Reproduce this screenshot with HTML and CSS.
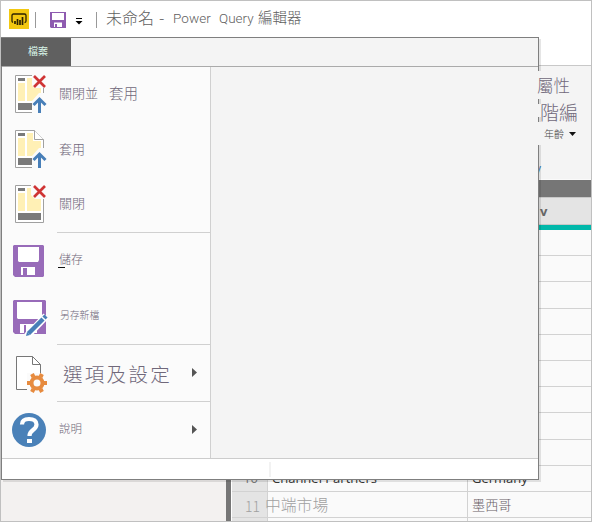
FILE: index.html
```html
<!DOCTYPE html>
<html lang="zh-Hant">
<head>
<meta charset="utf-8">
<title>Power Query 編輯器</title>
<link rel="stylesheet" href="styles.css">
</head>
<body>
<div class="window">
  <header class="titlebar">
    <svg class="logo" width="20" height="20" viewBox="0 0 20 20"><rect width="20" height="20" fill="#f2c811"/><path d="M4 13.5Q3 13 3 12V6.500Q3 5 4.500 5H15.500Q17 5 17 6.500V12Q17 13.500 15.500 13.500" fill="none" stroke="#2b2200" stroke-width="1.300"/><path d="M6 12v3M8.500 10v6M11 11v5M13.500 8v8" stroke="#2b2200" stroke-width="1.700"/></svg>
    <i class="sep"></i>
    <svg class="disk" width="16" height="16" viewBox="0 0 16 16"><path d="M0 0H16V16H1L0 15Z" fill="#8e5bb0"/><path d="M2 1H14V8H2ZM4 10.500H12V15H7V12H5V15H4Z" fill="#fff"/></svg>
    <svg class="drop" width="8" height="8" viewBox="0 0 8 8"><path d="M1 .5H7" stroke="#000"/><path d="M0.500 3H7.500L4 6.500Z" fill="#000"/></svg>
    <i class="sep sep2"></i>
    <h1 class="title"><span class="t1">未命名</span><span class="t2">-</span><span class="t3">Power</span><span class="t4">Query</span><span class="t5">編輯器</span></h1>
  </header>
  <div class="ribbon"><span class="ribbon-link">y</span></div>
  <main class="body">
    <aside class="queries"></aside>
    <div class="splitter"></div>
    <section class="grid">
      <div class="band"></div>
      <div class="head"><b>v</b></div>
      <div class="quality"></div>
      <div class="row"><span class="num">1</span><span class="seg"></span><span class="country"></span></div>
      <div class="row"><span class="num">2</span><span class="seg"></span><span class="country"></span></div>
      <div class="row"><span class="num">3</span><span class="seg"></span><span class="country"></span></div>
      <div class="row"><span class="num">4</span><span class="seg"></span><span class="country"></span></div>
      <div class="row"><span class="num">5</span><span class="seg"></span><span class="country"></span></div>
      <div class="row"><span class="num">6</span><span class="seg"></span><span class="country"></span></div>
      <div class="row"><span class="num">7</span><span class="seg"></span><span class="country"></span></div>
      <div class="row"><span class="num">8</span><span class="seg"></span><span class="country"></span></div>
      <div class="row"><span class="num">9</span><span class="seg"></span><span class="country"></span></div>
      <div class="row"><span class="num">10</span><span class="seg">Channel Partners</span><span class="country">Germany</span></div>
      <div class="row zh"><span class="num">11</span><span class="seg">中端市場</span><span class="country">墨西哥</span></div>
      <div class="row"><span class="num"></span><span class="seg"></span><span class="country"></span></div>
    </section>
  </main>

  <nav class="menu">
    <div class="tabs"><span class="file">檔案</span></div>
    <div class="content">
      <ul class="items">
        <li><svg class="icon" width="40" height="55" viewBox="0 0 40 55"><path d="M5.500 8.500H33.500V45.500H5.500Z" fill="#fff" stroke="#a0a0a0"/><path d="M8 11h7v3H8ZM8 36h23v7H8Z" fill="#7a7a7a"/><path d="M8 16h7v18H8ZM17 11h14v23H17Z" fill="#fff0b5"/><path d="M22 7h15v14H24l-2-3ZM22 34l7-8h9v20H22Z" fill="#fbfbfb"/><path d="M24 9l11 11M35 9l-11 11" stroke="#cf3434" stroke-width="2.700"/><path d="M29.500 46V33M23.500 38l6-6 6 6" fill="none" stroke="#487fb8" stroke-width="3"/></svg><span class="l1">關閉並</span><span class="l1b">套用</span></li>
        <li><svg class="icon" width="40" height="55" viewBox="0 0 40 55"><path d="M5.500 8.500H24.500L33.500 17.500V45.500H5.500Z" fill="#fff" stroke="#a0a0a0"/><path d="M8 11h7v3H8ZM8 36h15v7H8Z" fill="#7a7a7a"/><path d="M8 16h7v18H8ZM17 11h6v8h8v15H17Z" fill="#fff0b5"/><path d="M24.500 8.500v9h9" fill="#fff" stroke="#a0a0a0"/><path d="M22 34l7-8h9v20H22Z" fill="#fbfbfb"/><path d="M29.500 46V33M23.500 38l6-6 6 6" fill="none" stroke="#487fb8" stroke-width="3"/></svg><span class="l2">套用</span></li>
        <li><svg class="icon" width="40" height="55" viewBox="0 0 40 55"><path d="M5.500 8.500H33.500V45.500H5.500Z" fill="#fff" stroke="#a0a0a0"/><path d="M8 11h7v3H8ZM8 36h23v7H8Z" fill="#7a7a7a"/><path d="M8 16h7v18H8ZM17 11h14v23H17Z" fill="#fff0b5"/><path d="M21 7h16v15H25l-4-4Z" fill="#fbfbfb"/><path d="M24 9l11 11M35 9l-11 11" stroke="#cf3434" stroke-width="2.700"/></svg><span class="l2 l3">關閉</span></li>
        <li class="ruled"><svg class="icon" width="40" height="55" viewBox="0 0 40 55"><path d="M4 12H33L34 13V43L33 44H5L3 42V13Z" fill="#986bb9"/><path d="M8 14H29V27L28 29H9L8 28ZM11 34H25V42H17V35H13V42H11Z" fill="#fff"/></svg><span class="l4"><u></u>儲存</span></li>
        <li><svg class="icon" width="40" height="55" viewBox="0 0 40 55"><path d="M4 11H35L36 12V45H5L3 43V12Z" fill="#986bb9"/><path d="M7 13H32V28L31 30H8L7 29ZM10 35H27V44H16V36H14V44H10Z" fill="#fff"/><path d="M17 47L36 27" stroke="#fff" stroke-width="7"/><path d="M18.500 44.500L33 30" stroke="#487fb8" stroke-width="4.500"/><path d="M34 29L36 27" stroke="#487fb8" stroke-width="4.500"/><path d="M16 47l1-4 3 3Z" fill="#487fb8"/></svg><span class="l5">另存新檔</span></li>
        <li class="ruled"><svg class="icon" width="40" height="55" viewBox="0 0 40 55"><path d="M6.500 10.500H22.500L30.500 18.500V43.500H6.500Z" fill="#fff" stroke="#777"/><path d="M22.500 10.500v8h8" fill="none" stroke="#777"/><path d="M17 27h21v20H17Z" fill="#fbfbfb"/><g fill="none" stroke="#e78b3f"><circle cx="27" cy="37" r="5.500" stroke-width="4"/><path d="M23.500 43l-1.500 3M30.500 43l1.500 3M23.500 31l-1.500-3M30.500 31l1.500-3M20 37h-3M34 37h3" stroke-width="4"/></g></svg><span class="l6">選項及設定</span><svg class="arrow" width="5" height="9" viewBox="0 0 5 9"><path d="M0 0L5 4.500 0 9Z" fill="#555"/></svg></li>
        <li class="ruled"><svg class="icon" width="40" height="55" viewBox="0 0 40 55"><circle cx="19" cy="28" r="17" fill="#4a81b8"/><path d="M12 22.500Q12 17 19 17Q26.500 17 26.500 22.500Q26.500 25.500 23 28Q19.500 30.500 19.500 34" fill="none" stroke="#fff" stroke-width="4.200"/><path d="M17 37h5v4h-5Z" fill="#fff"/></svg><span class="l7">說明</span><svg class="arrow" width="5" height="9" viewBox="0 0 5 9"><path d="M0 0L5 4.500 0 9Z" fill="#555"/></svg></li>
      </ul>
      <div class="pane"></div>
    </div>
    <div class="foot"><i></i></div>
  </nav>

  <div class="commands">
    <span class="c1">屬性</span>
    <span class="c2">階編</span>
    <span class="c3">年齡<svg width="7" height="4" viewBox="0 0 7 4"><path d="M0 0H7L3.500 4Z" fill="#111"/></svg></span>
  </div>
</div>
</body>
</html>
```
FILE: styles.css
```css
* { box-sizing: border-box; }
body { margin: 0; font-family: "Noto Sans CJK TC", sans-serif; color: #70687a; }
.window { position: relative; width: 592px; height: 522px; border: 1px solid #c0c0c0; background: #fff; overflow: hidden; display: flex; flex-direction: column; }
.titlebar { height: 65px; flex: none; display: flex; align-items: flex-start; padding: 0 0 0 8px; border-bottom: 1px solid #c8c8c8; }
.logo { margin-top: 8px; }
.sep { width: 1px; height: 16px; margin: 11px 0 0 6px; background: #999; }
.disk { margin: 11px 0 0 14px; }
.drop { margin: 17px 0 0 9px; }
.sep2 { margin-left: 13px; }
.title { display: flex; margin: 0 0 0 9px; font-weight: 300; font-size: 16px; line-height: 32px; color: #606060; white-space: nowrap; }
.title span { flex: none; }
.t1 { width: 53px; }
.t2 { width: 14px; }
.title .t3, .title .t4 { font-family: Roboto, sans-serif; font-size: 13.5px; line-height: 34px; }
.t3 { width: 46px; letter-spacing: .1px; }
.t4 { width: 39px; }
.t5 { font-size: 14.500px; line-height: 32px; }

.ribbon { height: 113px; flex: none; background: #f4f4f4; padding: 88px 0 0 534px; }
.ribbon-link { font: 12px/18px "Open Sans", sans-serif; color: #3a7cba; }
.body { flex: 1; display: flex; min-height: 0; }
.queries { width: 225px; background: #f3f1f0; }
.splitter { width: 5px; background: #767676; margin-right: 1px; }
.grid { flex: 1; background: #fafafa; overflow: hidden; }
.band { height: 17px; margin-top: 1px; background: #767676; }
.head { height: 28px; border-top: 1px solid #c8c8c8; border-bottom: 1px solid #c8c8c8; background: #e4e4e4; padding-left: 308px; font: 13px/27px "Open Sans", sans-serif; color: #666; }
.quality { height: 5px; background: #01b8aa; }
.row { display: flex; height: 26.200px; border-bottom: 1px solid #d2d2d2; font: 13px/25px "Open Sans", sans-serif; color: #333; }
.row span { flex: none; white-space: nowrap; }
.num { width: 36px; background: #e4e4e4; border-right: 1px solid #d2d2d2; text-align: right; padding-right: 9px; color: #777; }
.seg { width: 200px; border-right: 1px solid #d2d2d2; padding-left: 4px; }
.country { padding-left: 4px; }
.zh { font-family: "Noto Sans CJK TC", sans-serif; font-weight: 300; }
.zh .num { font-size: 14px; color: #a0a0a0; padding-right: 7px; line-height: 28px; }
.zh .seg { font-size: 15.800px; color: #a0a0a0; padding-left: 0; text-indent: -3px; line-height: 26px; }
.zh .country { font-size: 13.200px; color: #685e66; }

.menu { position: absolute; left: 0; top: 36px; width: 538px; height: 443px; border: 1px solid #7f7f7f; background: #fff; display: flex; flex-direction: column; box-shadow: 2px 2px 0 #0000001a; }
.tabs { height: 29px; flex: none; background: #f4f4f4; border-bottom: 1px solid #aaa; }
.file { display: block; width: 70px; height: 28px; margin-left: -1px; padding-left: 4px; background: #606060; color: #d8f5e8; text-align: center; font-size: 10px; line-height: 25px; }
.content { height: 392px; flex: none; display: flex; border-bottom: 1px solid #ccc; }
.items { width: 209px; margin: 0; padding: 0; list-style: none; background: #fbfbfb; border-right: 1px solid #d0d0d0; font-weight: 300; }
.items li { position: relative; height: 55px; display: flex; align-items: center; padding-left: 8px; white-space: nowrap; }
.items .ruled { height: 56px; padding-top: 1px; background: linear-gradient(#d0d0d0, #d0d0d0) 55px 0 / 153px 1px no-repeat; }
.items li:nth-child(5) { height: 56px; }
.items .ruled:nth-child(6) { height: 57px; }
.items .ruled:nth-child(7) { height: 56px; }
.icon { flex: none; margin-right: 9px; }
.l1 { width: 50px; font-size: 13px; margin-bottom: 4px; }
.l1b { font-size: 14.500px; margin-bottom: 4px; }
.l2 { font-size: 13px; margin-bottom: 2px; }
.l3 { margin-bottom: 4px; }
.l4 { position: relative; font-size: 12px; margin-bottom: 5px; }
.l4 u { position: absolute; left: -1px; bottom: -1px; width: 7px; height: 1px; background: #111; }
.l5 { font-size: 9.800px; padding-left: 1px; margin-bottom: 2px; }
.l6 { font-size: 19.500px; letter-spacing: 2.300px; padding-left: 4px; }
.l7 { font-size: 11.500px; margin-bottom: 4px; }
.arrow { position: absolute; left: 190px; top: 24px; }
.pane { flex: 1; background: #f4f4f4; }
.foot { flex: 1; padding: 3px 0 0 267px; }
.foot i { display: block; width: 2px; height: 15px; background: #f2f2f2; }

.commands { position: absolute; left: 536px; top: 70px; width: 55px; display: flex; flex-direction: column; font-weight: 300; }
.commands span { background: #f4f4f4; white-space: nowrap; }
.c1 { width: 37px; height: 28px; font-size: 16.500px; line-height: 29px; }
.c2 { width: 55px; height: 13px; margin-top: 5px; padding-left: 3px; font-size: 19px; line-height: 15px; }
.c3 { height: 23px; margin-top: 5px; padding-left: 7px; font-size: 10px; line-height: 26px; display: flex; align-items: center; color: #444; }
.c3 svg { margin-left: 5px; }
```
